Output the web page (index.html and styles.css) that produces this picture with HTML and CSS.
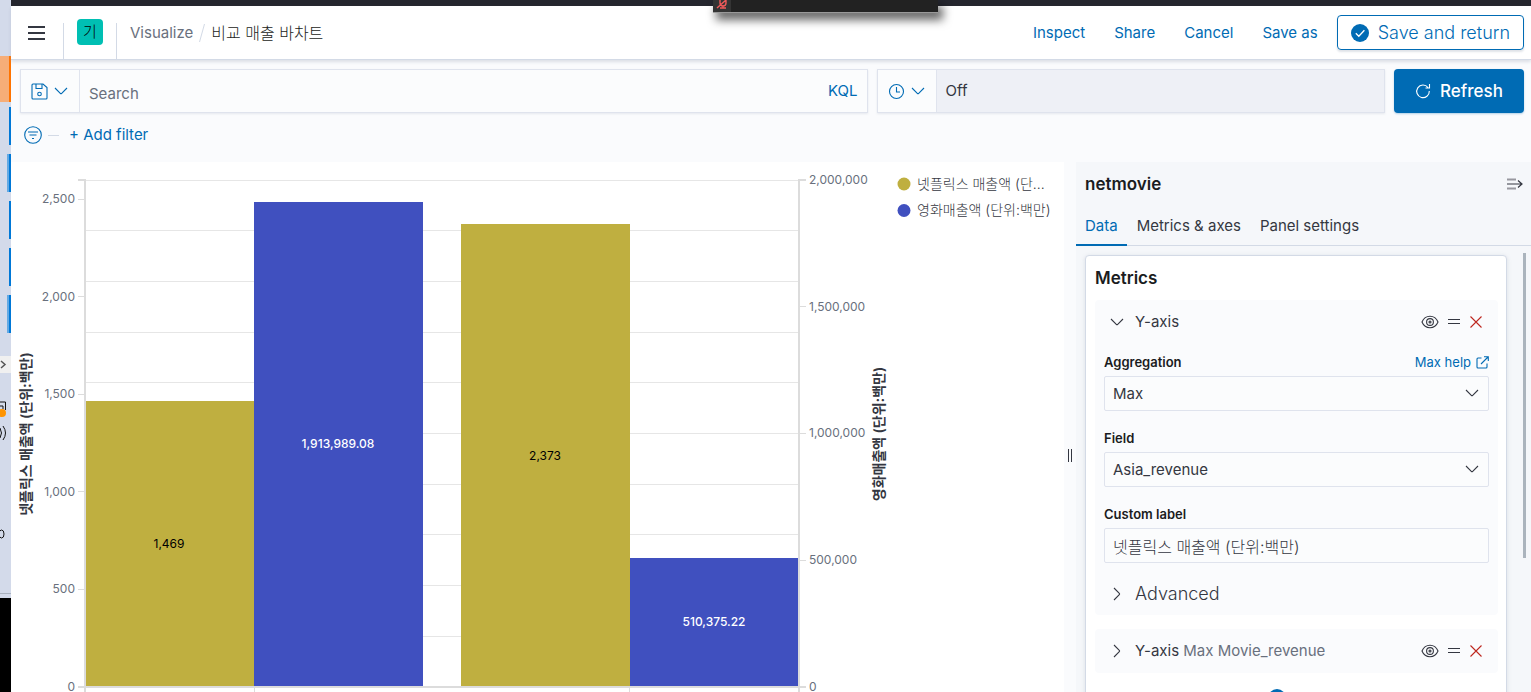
FILE: index.html
```html
<!DOCTYPE html>
<html lang="ko">
<head>
<meta charset="utf-8">
<title>비교 매출 바차트</title>
<link rel="stylesheet" href="styles.css">
</head>
<body>
<svg class="defs" aria-hidden="true">
  <symbol id="down" viewBox="0 0 16 16"><path d="M2 5l5.300 5.300a1 1 0 0 0 1.400 0L14 5"/></symbol>
  <symbol id="right" viewBox="0 0 16 16"><path d="M5 2l5.300 5.300a1 1 0 0 1 0 1.400L5 14"/></symbol>
  <symbol id="eye" viewBox="0 0 18 16"><path d="M1 8c1.500-3.600 4.600-5.800 8-5.800S15.500 4.400 17 8c-1.500 3.600-4.600 5.800-8 5.800S2.500 11.600 1 8z"/><circle cx="9" cy="8" r="3.400"/><circle cx="9" cy="8" r="1"/></symbol>
  <symbol id="grab" viewBox="0 0 14 16"><path d="M1 5.500h12M1 9.500h12"/></symbol>
  <symbol id="cross" viewBox="0 0 14 16"><path d="M1.500 2.500l11 11M12.500 2.500l-11 11"/></symbol>
</svg>
<div class="shell">
  <aside class="desktop" aria-hidden="true">
    <svg width="11" height="692" viewBox="0 0 11 692">
      <path fill="#f6ad78" d="M0 56h9v46H0z"/><path fill="#ff7300" d="M9 56h2v46H9z"/>
      <path fill="#0078d7" d="M9 107h2v38H9zM9 154h2v38H9zM9 201h2v38H9zM9 248h2v38H9zM9 295h2v38H9z"/>
      <path fill="#62a9e4" d="M7 154h2v38H7zM7 295h2v38H7z"/>
      <path fill="#f0f0f0" d="M0 356h11v17H0z"/><path fill="none" stroke="#555" stroke-width="1.500" d="M1 361l4 3.500-4 3.500"/>
      <path fill="none" stroke="#111" d="M0 402h5.500v8M0 406h3v3M0 428q3 5 0 10M3 426q5 7 0 14"/>
      <circle cx="2" cy="413" r="4" fill="#ff9400"/>
      <ellipse cx="1.500" cy="534" rx="2.500" ry="4" fill="none" stroke="#111"/>
      <path fill="#aab2bf" d="M0 593h11v1H0z"/><path d="M0 598h11v94H0z"/>
    </svg>
  </aside>
  <div class="app">
    <div class="topstrip"></div>
    <div class="float"><svg width="18" height="12" viewBox="0 0 18 12"><path fill="#343434" d="M0 0h18v12H0z"/><path fill="none" stroke="#f05a5a" stroke-width="1.400" d="M4 8l9-8M7 0v3q0 3 3 3t3-3V0M10 6v2M7 8h6"/></svg></div>
    <header class="header">
      <button class="menu" aria-label="Menu"><svg width="18" height="16" viewBox="0 0 18 16"><path d="M0 2h17M0 8h17M0 14h17" stroke="#343741" stroke-width="2"/></svg></button>
      <div class="space"><button class="avatar">기</button></div>
      <nav class="crumbs"><a href="#">Visualize</a><svg width="8" height="20" viewBox="0 0 8 20"><path d="M6.500 1L1.500 19" stroke="#d3dae6"/></svg><span class="current">비교 매출 바차트</span></nav>
      <nav class="actions">
        <button>Inspect</button><button>Share</button><button>Cancel</button><button>Save as</button>
        <button class="save"><svg width="18" height="18" viewBox="0 0 18 18"><circle cx="9" cy="9" r="9" fill="#006bb4"/><path d="M4.800 9.200l3 3 5.600-6" fill="none" stroke="#fff" stroke-width="1.300"/></svg>Save and return</button>
      </nav>
    </header>
    <section class="query">
      <div class="box">
        <button class="picker" aria-label="Saved queries"><svg class="line" width="17" height="17" viewBox="0 0 17 17"><path d="M2 1h10l4 3.500V15q0 1-1 1H2q-1 0-1-1V2q0-1 1-1zM5 1v4.500h6V1"/><circle cx="8.500" cy="11" r="1.800"/></svg><svg class="line" width="16" height="16"><use href="#down"/></svg></button>
        <input class="search" type="text" placeholder="Search" aria-label="Search">
        <button class="kql">KQL</button>
      </div>
      <div class="box">
        <button class="picker" aria-label="Date quick select"><svg class="line" width="17" height="17" viewBox="0 0 17 17"><circle cx="8.500" cy="8.500" r="7"/><path d="M8.500 4v5H12"/></svg><svg class="line" width="16" height="16"><use href="#down"/></svg></button>
        <button class="off">Off</button>
      </div>
      <button class="refresh"><svg width="16" height="16" viewBox="0 0 16 16"><path d="M13 4.500A6.300 6.300 0 1 0 14.300 8M14.500 1v4H10.500" fill="none" stroke="#fff" stroke-width="1.100"/></svg>Refresh</button>
    </section>
    <section class="filters">
      <button aria-label="Filter options"><svg class="line" width="18" height="18" viewBox="0 0 18 18"><circle cx="9" cy="9" r="8.300"/><path d="M4 6h10M5.500 9h7M8 12.500h2"/></svg></button>
      <span class="dash"></span><button>+ Add filter</button>
    </section>
    <main class="main">
      <section class="chart">
        <svg width="1053" height="530" viewBox="11 162 1053 530" role="img" aria-label="비교 매출 바차트">
          <path class="grid" d="M85 180.500h714M85 230.500h714M85 281.500h714M85 332.500h714M85 382.500h714M85 433.500h714M85 484.500h714M85 534.500h714M85 585.500h714M85 636.500h714"/>
          <path fill="#bfaf40" d="M85 401h169v286H85zM461 224h169v463H461z"/>
          <path fill="#4050bf" d="M254 202h169v485H254zM630 558h169v129H630z"/>
          <path class="axis" d="M78 180h7v512M799 692V180h7M78 687h728"/>
          <path class="tick" d="M78 199.500h7M78 296.500h7M78 394.500h7M78 491.500h7M78 589.500h7M800 306.500h6M800 433.500h6M800 560.500h6M254.500 687v5M629.500 687v5"/>
          <g class="labels end"><text x="75" y="203">2,500</text><text x="75" y="301">2,000</text><text x="75" y="398">1,500</text><text x="75" y="496">1,000</text><text x="75" y="593">500</text><text x="75" y="691">0</text></g>
          <g class="labels"><text x="809" y="184">2,000,000</text><text x="809" y="311">1,500,000</text><text x="809" y="437">1,000,000</text><text x="809" y="564">500,000</text><text x="809" y="691">0</text></g>
          <g class="title"><text transform="translate(31 434) rotate(-90)">넷플릭스 매출액 (단위:백만)</text><text transform="translate(884 434) rotate(-90)">영화매출액 (단위:백만)</text></g>
          <g class="values"><text x="169" y="548">1,469</text><text x="545" y="460">2,373</text><text class="light" x="338" y="448">1,913,989.08</text><text class="light" x="714" y="626">510,375.22</text></g>
          <circle cx="904" cy="184" r="6.500" fill="#bfaf40"/><circle cx="904" cy="210.500" r="6.500" fill="#4050bf"/>
          <g class="legend"><text x="917" y="189">넷플릭스 매출액 (단...</text><text x="917" y="215">영화매출액 (단위:백만)</text></g>
        </svg>
      </section>
      <div class="resizer"><svg width="6" height="13" viewBox="0 0 6 13"><path d="M1.500 0v13M4.500 0v13" stroke="#343741"/></svg></div>
      <aside class="side">
        <div class="sidehead"><h2>netmovie</h2><button aria-label="Collapse"><svg width="16" height="13" viewBox="0 0 16 13"><path d="M0 1.500h9M0 10.500h9" stroke="#98989f" stroke-width="2"/><path d="M0 6h15M11 2.500l4 3.500-4 3.500" fill="none" stroke="#343741" stroke-width="1.200"/></svg></button></div>
        <nav class="tabs"><button class="on">Data</button><button>Metrics &amp; axes</button><button>Panel settings</button></nav>
        <div class="scroll">
          <div class="card">
            <h2>Metrics</h2>
            <div class="agg">
              <div class="row"><button class="toggle"><svg class="line" width="16" height="16"><use href="#down"/></svg><span>Y-axis</span></button>
                <span class="tools"><button aria-label="Hide"><svg class="line" width="18" height="16"><use href="#eye"/></svg></button><button aria-label="Reorder"><svg class="line" width="14" height="16"><use href="#grab"/></svg></button><button class="red" aria-label="Remove"><svg class="line" width="14" height="16"><use href="#cross"/></svg></button></span></div>
              <div class="form">
                <div class="labelrow"><label for="agg">Aggregation</label><a href="#">Max help <svg class="line" width="13" height="13" viewBox="0 0 13 13"><path d="M5.500 2H2Q1 2 1 3v8q0 1 1 1h8q1 0 1-1V7.500M8 .700h4.300V5M12 1L5 8"/></svg></a></div>
                <div class="pick"><select id="agg"><option>Max</option></select><svg class="line" width="16" height="16"><use href="#down"/></svg></div>
                <div class="labelrow"><label for="field">Field</label></div>
                <div class="pick"><select id="field"><option>Asia_revenue</option></select><svg class="line" width="16" height="16"><use href="#down"/></svg></div>
                <div class="labelrow"><label for="custom">Custom label</label></div>
                <input id="custom" type="text" value="넷플릭스 매출액 (단위:백만)">
              </div>
              <button class="toggle advanced"><svg class="line" width="16" height="16"><use href="#right"/></svg><span>Advanced</span></button>
            </div>
            <div class="agg">
              <div class="row"><button class="toggle"><svg class="line" width="16" height="16"><use href="#right"/></svg><span>Y-axis <span class="muted">Max Movie_revenue</span></span></button>
                <span class="tools"><button aria-label="Hide"><svg class="line" width="18" height="16"><use href="#eye"/></svg></button><button aria-label="Reorder"><svg class="line" width="14" height="16"><use href="#grab"/></svg></button><button class="red" aria-label="Remove"><svg class="line" width="14" height="16"><use href="#cross"/></svg></button></span></div>
            </div>
            <button class="add" aria-label="Add metric"><svg width="18" height="18" viewBox="0 0 18 18"><circle cx="9" cy="9" r="9" fill="#006bb4"/><path d="M5 9h8M9 5v8" stroke="#fff"/></svg></button>
          </div>
          <div class="thumb"></div>
        </div>
      </aside>
    </main>
  </div>
</div>
</body>
</html>
```
FILE: styles.css
```css
* { box-sizing: border-box; }
body { margin: 0; overflow: hidden; background: #fafbfd; color: #343741; font: 15px/20px Inter, "Noto Sans CJK KR", sans-serif; }
button, input, select { font: inherit; color: inherit; margin: 0; padding: 0; border: 0; background: none; border-radius: 0; }
button { display: inline-flex; align-items: center; white-space: nowrap; }
a { color: #006bb4; text-decoration: none; }
h2 { margin: 0; color: #1a1c21; font-size: 17px; line-height: 24px; font-weight: 600; }
svg { display: block; flex: none; }
.defs { position: absolute; width: 0; height: 0; }
.line { fill: none; stroke: currentColor; stroke-width: 1.1; }
.shell { display: flex; height: 100vh; }
.desktop { flex: 0 0 11px; overflow: hidden; background: #d3daea; }
.app { position: relative; flex: 1; min-width: 0; display: flex; flex-direction: column; }
.topstrip { flex: 0 0 6px; background: #25262e; }
.float { position: absolute; top: 0; left: 702px; width: 225px; height: 12px; background: #222; box-shadow: 0 1px 0 #999, 4px 7px 10px 1px rgba(0,0,0,.6); z-index: 2; }

.header { flex: 0 0 54px; display: flex; align-items: center; padding-right: 7px; background: #fff; border-bottom: 1px solid #d3dae6; box-shadow: 0 2px 3px rgba(152,162,179,.3); }
.menu { flex: 0 0 52px; justify-content: center; }
.space { align-self: stretch; display: flex; align-items: flex-start; width: 54px; margin-top: 17px; border: solid #d3dae6; border-width: 0 1px; justify-content: center; }
.avatar { width: 26px; height: 26px; margin-top: -4px; border-radius: 4px; background: #00bfb3; color: #000; justify-content: center; font-weight: 300; }
.crumbs { display: flex; align-items: center; gap: 5px; margin-left: 13px; }
.crumbs a { color: #69707d; }
.current { color: #1a1c21; font-size: 16px; font-weight: 300; }
.actions { display: flex; align-items: center; gap: 29px; margin-left: auto; color: #006bb4; }
.actions .save { height: 35px; margin-left: -10px; padding: 0 13px; gap: 9px; font-size: 18px; font-weight: 300; border: 1px solid #006bb4; border-radius: 4px; box-shadow: 0 2px 2px rgba(152,162,179,.3); }

.query { display: grid; grid-template-columns: 5fr 3fr 130px; gap: 9px; padding: 9px 7px 0 9px; }
.box { display: flex; height: 44px; min-width: 0; border: 1px solid #dfe3ed; background: #fbfcfd; box-shadow: 0 1px 2px rgba(152,162,179,.2); }
.picker { flex: 0 0 59px; justify-content: center; gap: 5px; color: #006bb4; border-right: 1px solid #e0e4ee; }
.search { flex: 1; min-width: 0; padding: 5px 9px 0; }
.search::placeholder { color: #69707d; opacity: 1; }
.kql { padding: 0 9px; color: #006bb4; }
.off { flex: 1; padding-left: 9px; background: #eef0f6; }
.refresh { height: 44px; justify-content: center; gap: 9px; background: #006bb4; color: #fff; border-radius: 4px; font-size: 17px; font-weight: 500; box-shadow: 0 1px 2px rgba(0,107,180,.3); }
.filters { display: flex; align-items: center; height: 44px; padding-left: 13px; color: #006bb4; }
.dash { width: 11px; height: 1px; margin: 0 10px 0 6px; background: #d3dae6; }

.main { flex: 1; min-height: 0; display: flex; margin-top: 5px; }
.chart { flex: 1; min-width: 0; overflow: hidden; background: #fff; }
.grid { stroke: #e6e6e6; fill: none; }
.axis { stroke: #dcdcdc; stroke-width: 2; fill: none; }
.tick { stroke: #dcdcdc; fill: none; }
.labels { font-size: 12px; fill: #69707d; }
.end { text-anchor: end; }
.title { font-size: 14px; font-weight: 700; text-anchor: middle; fill: #343741; }
.values { font-size: 12px; text-anchor: middle; fill: #000; }
.values .light { fill: #fff; font-weight: 500; }
.legend { font-size: 14px; font-weight: 300; fill: #343741; }
.resizer { flex: 0 0 12px; display: flex; align-items: center; justify-content: center; padding-top: 57px; }

.side { flex: 0 0 455px; min-width: 0; display: flex; flex-direction: column; background: #f5f7fa; }
.sidehead { display: flex; align-items: center; justify-content: space-between; height: 44px; padding: 0 8px 0 9px; }
.tabs { display: flex; height: 40px; border-bottom: 1px solid #d3dae6; }
.tabs button { height: 40px; padding: 0 9px; }
.tabs button + button { padding-left: 10px; }
.tabs .on { color: #006bb4; box-shadow: inset 0 -2px #006bb4; }
.scroll { flex: 1; min-height: 0; display: flex; overflow: hidden; justify-content: space-between; padding: 9px 5px 0 9px; }
.card { flex: 1; height: max-content; margin-right: 16px; padding: 10px 8px 9px 9px; background: #fff; border: 1px solid #d3dae6; border-radius: 4px; box-shadow: 0 1px 4px rgba(152,162,179,.3); }
.thumb { flex: 0 0 3px; height: 305px; margin-top: -2px; background: #abb4bd; }
.agg { margin-top: 10px; background: #fafbfd; border-radius: 4px; }
.agg + .agg { margin-top: 14px; }
.row { display: flex; align-items: center; justify-content: space-between; height: 44px; padding: 0 15px 0 14px; }
.toggle { gap: 10px; }
.tools { display: flex; gap: 8px; }
.red { color: #bd271e; }
.form { padding: 8px 9px 9px; }
.labelrow { display: flex; justify-content: space-between; align-items: center; height: 20px; margin-bottom: 4px; font-size: 13px; }
.labelrow label { font-weight: 600; color: #1a1c21; }
.labelrow a { display: flex; align-items: center; gap: 5px; }
.pick { position: relative; margin-bottom: 17px; }
.pick svg { position: absolute; right: 9px; top: 9px; pointer-events: none; }
select, #custom { display: block; width: 100%; height: 35px; padding: 0 8px; appearance: none; background: #fbfcfd; border: 1px solid #dfe3ed; border-radius: 2px; }
#custom { font-size: 16px; font-weight: 300; }
.advanced { display: flex; height: 43px; padding: 0 14px; font-size: 18px; font-weight: 300; }
.muted { color: #69707d; }
.add { display: flex; margin: 16px auto 0; padding-right: 40px; }
```
